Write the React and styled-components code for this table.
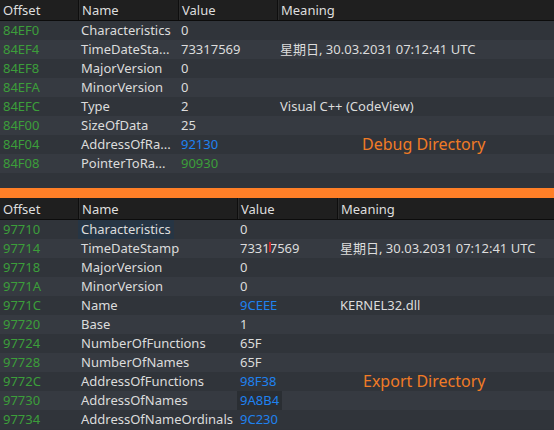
import React from "react";
import styled, { createGlobalStyle } from "styled-components";

const Global = createGlobalStyle`
  html, body { margin: 0; padding: 0; background: #2f3339; }
  body { font-family: "Noto Sans", "Noto Sans CJK SC", sans-serif; font-size: 12px; color: #dcdcdc; }
  * { box-sizing: border-box; }
`;

const Page = styled.div`
  width: 554px;
  height: 430px;
  display: flex;
  flex-direction: column;
  overflow: hidden;
  background: #2f3339;
`;

const Pane = styled.div`
  height: ${(p) => p.$h}px;
  overflow: hidden;
  display: flex;
  flex-direction: column;
  flex-shrink: 0;
`;

const Splitter = styled.div`
  height: 10px;
  flex-shrink: 0;
  background: #ff7f27;
`;

const Header = styled.div`
  display: grid;
  grid-template-columns: ${(p) => p.$cols};
  height: ${(p) => p.$h}px;
  background: #1f1f1f;
  border-bottom: 1px solid #0c0c0c;
  flex-shrink: 0;
`;

const HeadCell = styled.div`
  padding-left: 3px;
  display: flex;
  align-items: center;
  color: #dedede;
  font-size: 13px;
  border-left: ${(p) => (p.$first ? "none" : "1px solid #0e0e0e")};
  box-shadow: ${(p) => (p.$first ? "none" : "inset 1px 0 0 #2c2c2c")};
  white-space: nowrap;
  overflow: hidden;
`;

const Row = styled.div`
  display: grid;
  grid-template-columns: ${(p) => p.$cols};
  height: 19px;
  flex-shrink: 0;
  background: ${(p) => (p.$odd ? "#363a41" : "#30343a")};
  align-items: center;
`;

const Cell = styled.div`
  padding-left: 3px;
  white-space: nowrap;
  overflow: ${(p) => (p.$free ? "visible" : "hidden")};
  font-size: 13px;
  line-height: 19px;
  height: 19px;
  color: ${(p) =>
    p.$tone === "green" ? "#3c9e3a" : p.$tone === "blue" ? "#1f82f0" : "#dcdcdc"};
  position: relative;
`;

const Mark = styled.span`
  display: inline-block;
  margin-left: -3px;
  padding: 0 3px;
  background: ${(p) => (p.$kind === "select" ? "#263544" : "#2a2e33")};
`;

const Label = styled.span`
  display: inline-block;
  color: #f07b26;
  font-size: 16px;
  line-height: 20px;
  vertical-align: top;
  margin-top: -1px;
  margin-left: ${(p) => p.$ml}px;
`;

const Caret = styled.span`
  display: inline-block;
  width: 0;
  position: relative;
  &::after {
    content: "";
    position: absolute;
    left: -1px;
    top: -11px;
    width: 2px;
    height: 10px;
    background: #c8282c;
  }
`;

const debugRows = [
  ["84EF0", "Characteristics", "0", ""],
  ["84EF4", "TimeDateSta...", "73317569", "星期日, 30.03.2031 07:12:41 UTC"],
  ["84EF8", "MajorVersion", "0", ""],
  ["84EFA", "MinorVersion", "0", ""],
  ["84EFC", "Type", "2", "Visual C++ (CodeView)"],
  ["84F00", "SizeOfData", "25", ""],
  ["84F04", "AddressOfRa...", "92130", "", "blue", "Debug Directory"],
  ["84F08", "PointerToRa...", "90930", "", "green"],
  null,
];

const exportRows = [
  ["97710", "Characteristics", "0", "", null, null, "select"],
  ["97714", "TimeDateStamp", "73317569", "星期日, 30.03.2031 07:12:41 UTC", null, null, null, true],
  ["97718", "MajorVersion", "0", ""],
  ["9771A", "MinorVersion", "0", ""],
  ["9771C", "Name", "9CEEE", "KERNEL32.dll", "blue"],
  ["97720", "Base", "1", ""],
  ["97724", "NumberOfFunctions", "65F", ""],
  ["97728", "NumberOfNames", "65F", ""],
  ["9772C", "AddressOfFunctions", "98F38", "", "blue", "Export Directory"],
  ["97730", "AddressOfNames", "9A8B4", "", "blue", null, "hover"],
  ["97734", "AddressOfNameOrdinals", "9C230", "", "blue"],
];

function Table({ rows, cols, headH, labelMl }) {
  return (
    <>
      <Header $cols={cols} $h={headH}>
        <HeadCell $first>Offset</HeadCell>
        <HeadCell>Name</HeadCell>
        <HeadCell>Value</HeadCell>
        <HeadCell>Meaning</HeadCell>
      </Header>
      {rows.map((r, i) =>
        r ? (
          <Row key={i} $cols={cols} $odd={i % 2 === 1}>
            <Cell $tone="green">{r[0]}</Cell>
            <Cell>{r[6] === "select" ? <Mark $kind="select">{r[1]}</Mark> : r[1]}</Cell>
            <Cell $tone={r[4]}>
              {r[6] === "hover" ? (
                <Mark $kind="hover">{r[2]}</Mark>
              ) : r[7] ? (
                <>
                  {r[2].slice(0, 4)}
                  <Caret />
                  {r[2].slice(4)}
                </>
              ) : (
                r[2]
              )}
            </Cell>
            <Cell $free={!!r[5]}>{r[5] ? <Label $ml={labelMl}>{r[5]}</Label> : r[3]}</Cell>
          </Row>
        ) : (
          <Row key={i} $cols={cols} $odd={i % 2 === 1} />
        )
      )}
    </>
  );
}

export default function App() {
  return (
    <Page>
      <Global />
      <Pane $h={188}>
        <Table rows={debugRows} cols="78px 100px 99px 1fr" headH={21} labelMl={82} />
      </Pane>
      <Splitter />
      <Pane $h={232}>
        <Table rows={exportRows} cols="78px 159px 100px 1fr" headH={22} labelMl={23} />
      </Pane>
    </Page>
  );
}
